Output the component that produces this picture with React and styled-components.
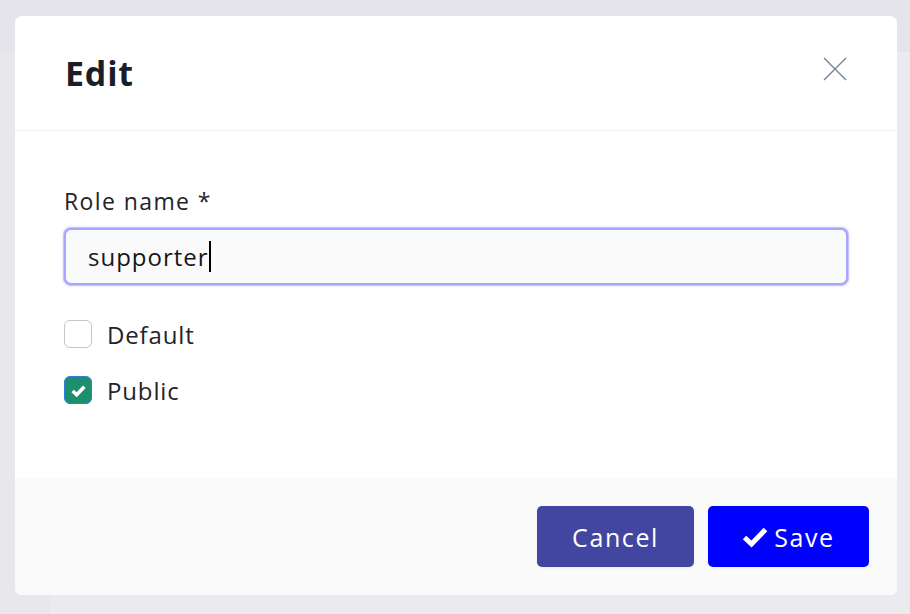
import React from 'react'
import styled, { createGlobalStyle } from 'styled-components'

const GlobalStyle = createGlobalStyle`
  html, body {
    margin: 0;
    padding: 0;
    width: 910px;
    height: 614px;
    overflow: hidden;
    font-family: "Open Sans", "Noto Sans", sans-serif;
  }
`

const Page = styled.div`
  width: 910px;
  height: 614px;
  display: grid;
  grid-template-rows: 52px 1fr;
  grid-template-columns: 50px 1fr;
  background: #ebeaef;
  position: relative;
`

const TopBar = styled.div`
  grid-column: 1 / 3;
  background: #e5e4ea;
`

const SideBar = styled.div`
  background: #e8e7ec;
`

const Main = styled.div`
  background: #ebeaef;
`

const Overlay = styled.div`
  position: absolute;
  inset: 0;
  padding: 16px 13px 19px 15px;
  display: flex;
`

const Modal = styled.div`
  flex: 1;
  background: #fff;
  border-radius: 7px;
  display: flex;
  flex-direction: column;
  overflow: hidden;
`

const Header = styled.div`
  height: 115px;
  flex: none;
  border-bottom: 1px solid #f2f2f4;
  display: flex;
  align-items: center;
  justify-content: space-between;
  padding: 0 50px 0 50px;
  box-sizing: border-box;
`

const Title = styled.h2`
  margin: 0;
  font-size: 34px;
  line-height: 40px;
  font-weight: 700;
  color: #1b1d27;
  letter-spacing: 0.8px;
`

const Close = styled.button`
  border: 0;
  background: none;
  padding: 0;
  width: 24px;
  height: 24px;
  margin-top: -9px;
  cursor: pointer;
  display: flex;
`

const Body = styled.div`
  flex: 1;
  padding: 56px 49px 0 49px;
  display: flex;
  flex-direction: column;
`

const Label = styled.label`
  font-size: 23px;
  line-height: 28px;
  letter-spacing: 1.4px;
  color: #22232b;
  margin-bottom: 13px;
`

const InputWrap = styled.div`
  position: relative;
  display: flex;
  flex-direction: column;
  margin-bottom: 35px;
`

const Input = styled.input`
  height: 57px;
  box-sizing: border-box;
  border: 2px solid #a6a6ff;
  box-shadow: 0 0 0 1px rgba(150, 150, 255, 0.45), 0 0 3px 1px rgba(150, 150, 255, 0.35);
  border-radius: 7px;
  background: #fafafa;
  padding: 0 22px;
  font-family: inherit;
  font-size: 24px;
  letter-spacing: 1px;
  color: #15161c;
  outline: none;
`

const Caret = styled.span`
  position: absolute;
  left: 145px;
  top: 13px;
  width: 1.5px;
  height: 31px;
  background: #000;
  pointer-events: none;
`

const CheckRow = styled.label`
  display: flex;
  align-items: center;
  gap: 15px;
  font-size: 24px;
  letter-spacing: 0.85px;
  color: #22232b;
  height: 28px;
  margin-bottom: 28px;
`

const Box = styled.span`
  width: 28px;
  height: 28px;
  box-sizing: border-box;
  border-radius: 6px;
  border: ${p => (p.$checked ? '1.5px solid #2f7fd8' : '1.5px solid #c4c6cc')};
  background: ${p => (p.$checked ? '#1e8f6e' : '#fff')};
  display: flex;
  align-items: center;
  justify-content: center;
`

const Footer = styled.div`
  height: 117px;
  flex: none;
  background: #fafafa;
  display: flex;
  align-items: center;
  justify-content: flex-end;
  gap: 14px;
  padding: 0 28px 0 0;
`

const Button = styled.button`
  height: 61px;
  width: ${p => p.$w}px;
  border: 0;
  border-radius: 5px;
  background: ${p => p.$bg};
  color: #fff;
  font-family: inherit;
  font-size: 25px;
  letter-spacing: 1.6px;
  display: flex;
  align-items: center;
  justify-content: center;
  gap: 6px;
  cursor: pointer;
  box-shadow: 0 1px 3px rgba(0, 0, 0, 0.06);
`

const Check = ({ size = 14, stroke = 3 }) => (
  <svg width={size} height={size} viewBox="0 0 16 16">
    <path d="M2.5 8.5 L6.3 12 L13.5 4.5" fill="none" stroke="#fff" strokeWidth={stroke} strokeLinejoin="miter" />
  </svg>
)

export default function App() {
  return (
    <>
      <GlobalStyle />
      <Page>
        <TopBar />
        <SideBar />
        <Main />
        <Overlay>
          <Modal>
            <Header>
              <Title>Edit</Title>
              <Close aria-label="Close">
                <svg width="24" height="24" viewBox="0 0 24 24">
                  <path d="M1 1 L23 23 M23 1 L1 23" stroke="#6e8096" strokeWidth="1.3" fill="none" />
                </svg>
              </Close>
            </Header>
            <Body>
              <Label>Role name *</Label>
              <InputWrap>
                <Input defaultValue="supporter" />
                <Caret />
              </InputWrap>
              <CheckRow>
                <Box />
                Default
              </CheckRow>
              <CheckRow>
                <Box $checked>
                  <Check size={17} stroke={3.4} />
                </Box>
                Public
              </CheckRow>
            </Body>
            <Footer>
              <Button $bg="#4346a1" $w={157}>Cancel</Button>
              <Button $bg="#0000fe" $w={161}>
                <svg width="26" height="22" viewBox="0 0 26 22">
                  <path d="M2.5 11.5 L9.5 18 L23.5 3.5" fill="none" stroke="#fff" strokeWidth="5" strokeLinejoin="miter" />
                </svg>
                Save
              </Button>
            </Footer>
          </Modal>
        </Overlay>
      </Page>
    </>
  )
}
